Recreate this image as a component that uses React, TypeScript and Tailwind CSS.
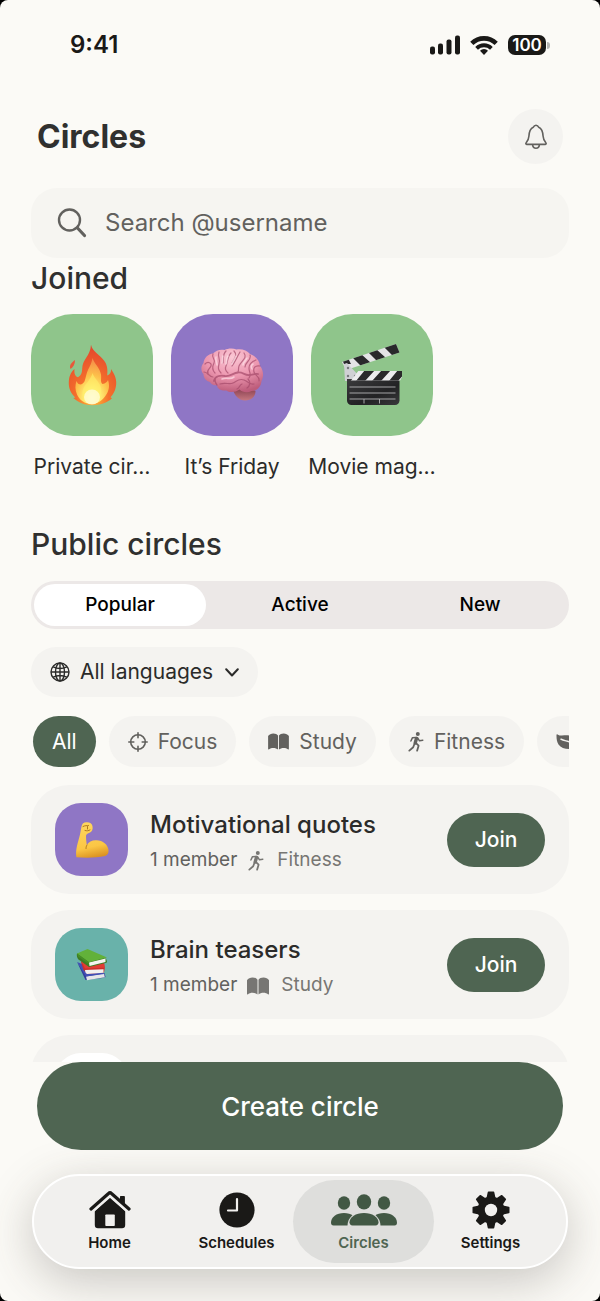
import { useState } from "react";
import type { ReactNode } from "react";
import clsx from "clsx";

interface IconProps {
  className?: string;
}

/* ---------- Status bar ---------- */

function SignalIcon() {
  return (
    <svg width="30" height="20" viewBox="0 0 30 20" fill="currentColor" aria-hidden="true">
      <rect x="0" y="11.5" width="5" height="8" rx="2" />
      <rect x="8" y="8.500" width="5" height="11" rx="2" />
      <rect x="16.5" y="4.5" width="5" height="15" rx="2" />
      <rect x="25" y="0.5" width="5" height="19" rx="2" />
    </svg>
  );
}

function WifiIcon() {
  return (
    <svg width="28" height="20" viewBox="0 0 28 20" fill="none" stroke="currentColor" aria-hidden="true">
      <path d="M1.800 8.300a17.500 17.500 0 0 1 24.400 0" strokeWidth="4.600" />
      <path d="M6.600 13.300a10.500 10.500 0 0 1 14.800 0" strokeWidth="3.800" />
      <path d="M14 20l-4-4.200a5.600 5.600 0 0 1 8 0z" fill="currentColor" stroke="none" />
    </svg>
  );
}

function StatusBar() {
  return (
    <div className="flex h-[90px] shrink-0 items-center justify-between pr-[50px] pl-[70px] text-[#1a1917]">
      <span className="text-2xl font-semibold">9:41</span>
      <div className="flex items-center gap-[10px]">
        <SignalIcon />
        <WifiIcon />
        <div className="flex items-center gap-px">
          <span className="flex h-5 w-[38px] items-center justify-center rounded-[7px] bg-[#1a1917] text-[17px] leading-none font-semibold text-white">
            100
          </span>
          <span className="h-[7px] w-[3px] rounded-r-full bg-[#b5b4b1]" />
        </div>
      </div>
    </div>
  );
}

/* ---------- Line icons ---------- */

function BellIcon() {
  return (
    <svg width="24" height="26" viewBox="0 0 24 26" fill="none" stroke="currentColor" strokeWidth="1.6" strokeLinejoin="round" aria-hidden="true">
      <path d="M2.6 20.4c-.8 0-1-.9-.5-1.5 1.7-2 2.6-3 2.8-6.600C5.200 7.500 6 4.600 9.300 3.300 9.900 1.800 10.800 1.200 12 1.200s2.100.6 2.700 2.100c3.300 1.300 4.100 4.200 4.400 9 .2 3.600 1.100 4.600 2.800 6.600.5.600.3 1.500-.5 1.500z" />
      <path d="M8.600 20.600c.2 2.300 1.500 3.600 3.400 3.600s3.200-1.300 3.400-3.600" />
    </svg>
  );
}

function SearchIcon() {
  return (
    <svg width="30" height="30" viewBox="0 0 30 30" fill="none" stroke="currentColor" strokeLinecap="round" aria-hidden="true">
      <circle cx="12.500" cy="12" r="10.500" strokeWidth="2.400" />
      <path d="M20.500 20l7 7.500" strokeWidth="3.200" />
    </svg>
  );
}

function GlobeIcon() {
  return (
    <svg width="20" height="20" viewBox="0 0 20 20" fill="none" stroke="currentColor" strokeWidth="1.400" aria-hidden="true">
      <circle cx="10" cy="10" r="9" />
      <ellipse cx="10" cy="10" rx="4.500" ry="9" />
      <path d="M10 1v18M1 10h18M3.200 4.800c4 2 9.600 2 13.600 0M3.200 15.200c4-2 9.600-2 13.600 0" />
    </svg>
  );
}

function ChevronIcon() {
  return (
    <svg className="ml-[2px]" width="14" height="9" viewBox="0 0 14 9" fill="none" stroke="currentColor" strokeWidth="2" strokeLinecap="round" strokeLinejoin="round" aria-hidden="true">
      <path d="M1.200 1.200L7 7.500l5.800-6.300" />
    </svg>
  );
}

function FocusIcon() {
  return (
    <svg width="20" height="20" viewBox="0 0 20 20" fill="none" stroke="currentColor" strokeWidth="1.600" strokeLinecap="round" aria-hidden="true">
      <circle cx="10" cy="10" r="7.300" />
      <path d="M10 .8v5M10 14.200v5M.8 10h5M14.200 10h5" />
    </svg>
  );
}

function BookIcon({ className }: IconProps) {
  return (
    <svg className={className} viewBox="0 0 22 18" fill="currentColor" aria-hidden="true">
      <path d="M0 3.200C1.200 1.300 3.200.4 5.500.4s4 .8 5 2.300v14.900c-1.200-1.200-3-1.800-5-1.800-1.800 0-3.300.5-4.400 1.500-.6.4-1.100.2-1.100-.5zM22 3.200C20.800 1.300 18.800.4 16.500.4s-4 .8-5 2.300v14.900c1.200-1.200 3-1.800 5-1.800 1.800 0 3.300.5 4.400 1.500.6.4 1.100.2 1.100-.5z" />
    </svg>
  );
}

function RunnerIcon({ className }: IconProps) {
  return (
    <svg className={className} viewBox="0 0 16 20" fill="none" stroke="currentColor" strokeLinecap="round" strokeLinejoin="round" aria-hidden="true">
      <circle cx="9.800" cy="2.100" r="2" fill="currentColor" stroke="none" />
      <path d="M8.500 6.400L7.200 11" strokeWidth="3.400" />
      <path d="M8.200 5.400L4.500 5.700 2.900 9" strokeWidth="1.500" />
      <path d="M9.600 5.900l1.900 2.900 3.300-.6" strokeWidth="1.500" />
      <path d="M8 11.200l2.600 2.500-1.500 5" strokeWidth="1.800" />
      <path d="M6.500 11.800l-1.300 3.500-3.900 3.300" strokeWidth="1.800" />
    </svg>
  );
}

function LeafIcon() {
  return (
    <svg className="h-4 w-[22px] shrink-0" viewBox="0 0 22 16" aria-hidden="true">
      <path d="M.5.800c0-.6.600-.8 1-.4C4.500 2.600 9 .8 13.500 1.500c5.500 1 7.500 5.500 6.500 11.500-.2 1-1 1.500-2 1.600-6 1-12.500.4-15.500-4C.8 8 .4 4.500.5.800z" fill="currentColor" />
      <path d="M5 5.200c3.500 2.500 8.500.8 12.500 5.300" fill="none" stroke="#f4f3f0" strokeWidth="1.500" strokeLinecap="round" />
    </svg>
  );
}

/* ---------- Tab bar icons ---------- */

function HomeIcon() {
  return (
    <svg width="42" height="38" viewBox="0 0 42 38" aria-hidden="true">
      <path d="M32 5h2.800c.5 0 .9.400.9.900v9.600L31.100 11.500V5.900c0-.5.400-.9.900-.9z" fill="currentColor" />
      <path d="M21 6L5.800 20v14a3.200 3.200 0 0 0 3.200 3.200h24a3.200 3.200 0 0 0 3.200-3.200V20z" fill="currentColor" />
      <path d="M1.500 20.500L21 3.500l19.500 17" fill="none" stroke="#f1f0ee" strokeWidth="5" />
      <path d="M2 18L19.500 2.500a2.200 2.200 0 0 1 3 0L40 18" fill="none" stroke="currentColor" strokeWidth="3.200" strokeLinecap="round" />
      <path d="M31.100 5.900c0-.5.400-.9.900-.9h2.800c.5 0 .9.400.9.900v8l-4.600-4z" fill="currentColor" />
      <rect x="16.300" y="23.500" width="9.500" height="11.500" rx=".8" fill="#f1f0ee" />
    </svg>
  );
}

function ClockIcon() {
  return (
    <svg width="36" height="36" viewBox="0 0 36 36" fill="none" aria-hidden="true">
      <circle cx="18" cy="18" r="17.600" fill="currentColor" />
      <path d="M18 7v11.500H9" stroke="#f1f0ee" strokeWidth="2.200" strokeLinecap="round" strokeLinejoin="round" />
    </svg>
  );
}

function PeopleIcon() {
  return (
    <svg width="66" height="32" viewBox="0 0 66 32" fill="currentColor" aria-hidden="true">
      <ellipse cx="13" cy="9" rx="6.200" ry="6.700" />
      <path d="M0 28.800C0 23 5.500 19 13 19c7.200 0 13 4 13 9.800 0 1.600-.8 2.700-2.500 2.700h-21C.8 31.500 0 30.400 0 28.800z" />
      <ellipse cx="53" cy="9" rx="6.200" ry="6.700" />
      <path d="M40 28.800C40 23 45.500 19 53 19c7.200 0 13 4 13 9.800 0 1.600-.8 2.700-2.500 2.700h-21c-1.700 0-2.500-1.100-2.500-2.700z" />
      <path d="M16.500 33c-.6-9 6.500-15.500 16.500-15.500S50.100 24 49.500 33z" fill="#dededc" />
      <ellipse cx="33" cy="7.800" rx="7.200" ry="7.600" />
      <path d="M18.500 28.300c0-5 6.200-9.300 14.500-9.300s14.500 4.300 14.500 9.300c0 2-1 3.200-3 3.200h-23c-2 0-3-1.200-3-3.200z" />
    </svg>
  );
}

function GearIcon() {
  return (
    <svg width="38" height="38" viewBox="0 0 38 38" aria-hidden="true">
      <g fill="currentColor" stroke="currentColor" strokeWidth="1.600" strokeLinejoin="round">
        {[0, 45, 90, 135, 180, 225, 270, 315].map((angle) => (
          <path key={angle} d="M16.500 1.300h5l1.500 7h-8z" transform={`rotate(${angle} 19 19)`} />
        ))}
        <circle cx="19" cy="19" r="12.600" />
      </g>
      <circle cx="19" cy="19" r="6.200" fill="#f1f0ee" />
    </svg>
  );
}

/* ---------- Circle artwork ---------- */

function FireArt() {
  return (
    <svg width="62" height="62" viewBox="0 0 62 62" aria-hidden="true">
      <defs>
        <radialGradient id="fire-outer" cx=".5" cy=".9" r=".85">
          <stop offset="0" stopColor="#ffc23a" />
          <stop offset=".4" stopColor="#f4702c" />
          <stop offset="1" stopColor="#e4482c" />
        </radialGradient>
        <radialGradient id="fire-inner" cx=".5" cy=".88" r=".85">
          <stop offset="0" stopColor="#fffef0" />
          <stop offset=".25" stopColor="#fff27a" />
          <stop offset=".6" stopColor="#fdc04a" />
          <stop offset="1" stopColor="#f58a48" />
        </radialGradient>
      </defs>
      <path d="M14 16c-4 3-6 5.500-4.500 9 3-2 4.500-5 4.500-9z" fill="#e8583a" />
      <path d="M30 .8c1.500 7 8 9.200 13 15.700 3.600 4.700 3.700 9.700 3.200 15 3-1 4-3.500 3.800-6.500 3.500 5 6.500 11 4.800 18-.8 4-2.500 7.500-5.300 10.300l1.500 1C46 59 39 61.200 31.500 61.200c-8 0-13-2.200-19.200-7.200l2-.6C9.500 49.500 7.500 43.500 7.800 38c.2-5 1.700-9.500 5.700-13-.3 4 0 6.800 3.500 8.300 3-1.800 4-4 4.200-8.800C21.500 15 29.500 12 30 .8z" fill="url(#fire-outer)" />
      <path d="M31.500 14c2 6 7.500 10 8.500 16.500.6 4.500-1 7.500 1.500 9.500 3-.5 4.500-2 5.500-4 2 5 1 11-2 15-3.500 5.500-8.500 9-14 9-7.500 0-12.500-4-15-9.500-2-4.500-2-9.500-.5-13.500 1 2.500 2 3.500 4.500 3.500 4.500-1.500 4-6 6-12 1.800-5 4.500-8 5.500-14.500z" fill="url(#fire-inner)" />
      <path d="M31.500 29c2 5.500 6 8 8 13 2 5.500 0 17-8 18-9-.5-12-9.500-9-16 2.500-5 7.500-9 9-15z" fill="#fff06b" opacity=".6" />
      <ellipse cx="31" cy="53" rx="8" ry="7.500" fill="#fffde6" opacity=".7" />
    </svg>
  );
}

function BrainArt() {
  return (
    <svg width="64" height="54" viewBox="0 0 64 54" aria-hidden="true">
      <defs>
        <radialGradient id="brain-top" cx=".5" cy=".2" r=".8">
          <stop offset="0" stopColor="#fbc8d5" />
          <stop offset=".55" stopColor="#ec96af" />
          <stop offset="1" stopColor="#bd5c7a" />
        </radialGradient>
        <linearGradient id="brain-stem" x1="0" y1="0" x2="0" y2="1">
          <stop offset="0" stopColor="#7d3547" />
          <stop offset="1" stopColor="#c67880" />
        </linearGradient>
      </defs>
      <path d="M33 42c2 6 6 10.500 12 10.500 6.500 0 10.500-4 10.500-9.500L46 38z" fill="url(#brain-stem)" />
      <path d="M17 37c-3 .8-6-.5-7-3-4-1-6.500-4-6.500-8C.5 23 .8 18 3.500 15 4 10 8 6 13 5.500 16 2.500 20 1 24.500 2 28 .2 33 0 36.500 1.500 42 .5 47 2.500 50 6c5.500 2 9.500 6.500 10 12 3.500 4 4 10 1.500 15-.5 6-4.500 10-10 10-4 2.200-9 1.500-12-1.500-4 3-10 3.300-13 1-5 .5-9.500-1.500-9.500-5.500z" fill="url(#brain-top)" />
      <g fill="none" stroke="#a54a6a" strokeWidth="1.200" strokeLinecap="round" opacity=".7">
        <path d="M14 33c1-5 6-6 11-5 5 .8 8-3 13-3.500 5-.5 7 3 11 2.500 4 0 6-2 9-1" strokeWidth="1.800" />
        <path d="M17 37c-2-2-2-4-2-6M20 36c6-2 9 1 13-1s6-5 11-3 6 5 10 4" />
        <path d="M5 16c3-3 7-1 6 2s-5 4-3 8M13 6c-2 4 3 5 1 9s-2 7 1 10" />
        <path d="M19 4c-2 5 2 7 0 12-1 4-1 6 2 9M26 3c-4 4-2 8-3 12M31 5c-4 4-3 9-5 13s1 6 2 7" />
        <path d="M34 3c4 4 0 8-2 12M40 4c-3 5-5 10-8 14M44 5c4 5-3 8-5 13-1 3 0 4-1 6" />
        <path d="M50 7c2 5-5 7-5 12M56 12c-3 1-7 3-7 8s3 6 0 10M60 18c-5-1-7 2-6 6s6 4 5 9" />
        <path d="M4 24c4 0 5 5 9 5M48 31c3 3 2 7-1 9M37 41c3-1 2-4 5-5" />
      </g>
      <g fill="none" stroke="#ffe0e8" strokeWidth="1.600" strokeLinecap="round" opacity=".7">
        <path d="M16 9c-1 3 1 5 1 8M23 8c-1 3 0 4-1 7M28 8c-2 3-1 6-2 8M36 8c-1 3-3 5-4 8M47 10c-1 3-4 4-4 7" />
        <path d="M22 31c5-2 8 1 12-2M53 16c-2 1-2 3-1 5" />
      </g>
    </svg>
  );
}

function ClapperArt() {
  return (
    <svg width="60" height="62" viewBox="0 0 60 62" aria-hidden="true">
      <defs>
        <clipPath id="clap-arm">
          <path d="M0 18L54 0l3.500 8.500L4 26z" />
        </clipPath>
        <clipPath id="clap-bar">
          <path d="M3 27h57v6l-2 3.500H3z" />
        </clipPath>
        <linearGradient id="clap-board" x1="0" y1="0" x2="1" y2="1">
          <stop offset="0" stopColor="#3b3b3d" />
          <stop offset=".6" stopColor="#222224" />
          <stop offset="1" stopColor="#39393b" />
        </linearGradient>
      </defs>
      <g clipPath="url(#clap-arm)">
        <path d="M0 0h60v28H0z" fill="#e4e4e6" />
        <path d="M0 15l6-1 3 6H2zM10 13l9-3 10 9-9 4zM26 8l8-3 10 9-9 3zM42 3l12-4 6 12-8 2z" fill="#29292b" />
      </g>
      <path d="M2 20l3-1 13 14-3 4H3z" fill="#cfd0d4" />
      <circle cx="6" cy="24" r="1.200" fill="#77787c" />
      <circle cx="6" cy="32" r="1.200" fill="#77787c" />
      <circle cx="13" cy="32" r="1.200" fill="#77787c" />
      <path d="M5 35h52.500v21.500a4.500 4.500 0 0 1-4.500 4.500H9.500A4.500 4.500 0 0 1 5 56.500z" fill="url(#clap-board)" />
      <g clipPath="url(#clap-bar)">
        <path d="M17 26h43v12H8z" fill="#ececee" />
        <path d="M23 26h10l-10 11h-9zM40 26h9L39 37h-9zM56 26h10L56 37h-9z" fill="#29292b" />
      </g>
      <path d="M7.500 43h46M7.500 49h46M7.500 55h46M22 55v4.500M37.500 55v4.500" stroke="#b4b4b7" strokeWidth=".9" />
    </svg>
  );
}

function MuscleArt() {
  return (
    <svg width="34" height="38" viewBox="0 0 34 38" aria-hidden="true">
      <defs>
        <linearGradient id="muscle-skin" x1=".3" y1="0" x2=".5" y2="1">
          <stop offset="0" stopColor="#ffd75e" />
          <stop offset=".7" stopColor="#fbc645" />
          <stop offset="1" stopColor="#dc9322" />
        </linearGradient>
      </defs>
      <path d="M6.500 5.500C7 2.500 9 1 12 1.200c3 0 5 1.300 5.500 4 .6 3.300-.5 5.500-3.500 6.800-1.800.8-3 1.300-3 3 0 3.500.4 6 .8 9 2-3.500 5.700-5 9.700-4.700C28 19.600 32.800 23.500 33.500 29c.3 3-.7 5-3.500 6-9 2-20 2-28.600 1.200C.2 28 3 22 5 13.500z" fill="url(#muscle-skin)" />
      <path d="M8 5.500c2-1.200 4-.7 5.500-1M10 9.500c2 .6 3.500.4 5-.6M12.500 5.500v2.500M12 24c-.8 1.300-1 2.300-1 3.500" fill="none" stroke="#b07a20" strokeWidth="1" strokeLinecap="round" />
    </svg>
  );
}

function BooksArt() {
  return (
    <svg width="32" height="34" viewBox="0 0 32 34" aria-hidden="true">
      <path d="M1.500 15l8 17 17-2 3-1-1-4-17 2z" fill="#33409c" />
      <path d="M10 28.500l18-3 .8 3.700-17.800 3z" fill="#e6e6e8" />
      <path d="M1 14l9 14.500 18-2.500-1-2z" fill="#4350b5" />
      <path d="M5 14l2.500 8 4 4 16.500-1.500.8-4.500L28 15z" fill="#c9302c" />
      <path d="M9 22l18.500-.8v3.500L11 26c-1.500-1-2-2.500-2-4z" fill="#f2f1ef" />
      <path d="M5 13l4 7.500 19.500-.8L28 13z" fill="#e23b33" />
      <path d="M1 5.500C.5 8 1 9.800 2.500 11.500L13 19l17.500-4.300.5-1.200-1-3z" fill="#3d7c22" />
      <path d="M13 14.500l16.500-4V14L13.500 18z" fill="#f4f4ef" />
      <path d="M1 5.500L11.500 1 31 9.500l-18 4.800z" fill="#62b13a" />
      <path d="M1 5.500l12 8.800v2L2 8.500z" fill="#468f27" />
    </svg>
  );
}

/* ---------- Data ---------- */

const joinedCircles = [
  { name: "Private cir…", color: "bg-[#8fc58b]", art: <FireArt /> },
  { name: "It’s Friday", color: "bg-[#8f76c5]", art: <BrainArt /> },
  { name: "Movie mag…", color: "bg-[#8fc58b]", art: <ClapperArt /> },
];

const tabs = ["Popular", "Active", "New"];

const categories = [
  { name: "Focus", icon: <FocusIcon /> },
  { name: "Study", icon: <BookIcon className="h-[17px] w-[21px]" /> },
  { name: "Fitness", icon: <RunnerIcon className="h-5 w-4" /> },
];

const publicCircles = [
  {
    name: "Motivational quotes",
    members: "1 member",
    category: "Fitness",
    color: "bg-[#8f76c5]",
    art: <MuscleArt />,
    icon: <RunnerIcon className="h-5 w-[18px]" />,
  },
  {
    name: "Brain teasers",
    members: "1 member",
    category: "Study",
    color: "bg-[#69b2aa]",
    art: <BooksArt />,
    icon: <BookIcon className="h-[18px] w-[22px]" />,
  },
];

const navItems = [
  { name: "Home", icon: <HomeIcon /> },
  { name: "Schedules", icon: <ClockIcon /> },
  { name: "Circles", icon: <PeopleIcon /> },
  { name: "Settings", icon: <GearIcon /> },
];

/* ---------- Sections ---------- */

function Chip({
  active,
  onClick,
  label,
  children,
}: {
  active: boolean;
  onClick: () => void;
  label?: string;
  children: ReactNode;
}) {
  return (
    <button
      onClick={onClick}
      aria-label={label}
      className={clsx(
        "flex h-[51px] shrink-0 items-center gap-[10px] rounded-full px-[19px] text-[21px]",
        active ? "bg-[#4f6552] text-white" : "bg-[#f4f3f0] text-[#62615e]"
      )}
    >
      {children}
    </button>
  );
}

function CircleCard({ circle }: { circle: (typeof publicCircles)[number] }) {
  return (
    <li className="flex h-[109px] shrink-0 items-center rounded-[38px] bg-[#f4f3f0] px-6">
      <div
        className={`flex size-[73px] shrink-0 items-center justify-center rounded-[26px] ${circle.color}`}
      >
        {circle.art}
      </div>
      <div className="ml-[22px] flex-1 pt-[6px]">
        <h3 className="text-2xl leading-8 font-medium whitespace-nowrap text-[#2b2b2a]">
          {circle.name}
        </h3>
        <div className="mt-1 flex h-8 items-center text-[19px] text-[#62615e]">
          <span>{circle.members}</span>
          <span className="ml-[10px] flex items-center gap-3 text-[#777673]">
            {circle.icon}
            <span>{circle.category}</span>
          </span>
        </div>
      </div>
      <button className="h-[54px] w-[98px] rounded-full bg-[#4f6552] text-[21px] font-medium text-white">
        Join
      </button>
    </li>
  );
}

export default function App() {
  const [tab, setTab] = useState("Popular");
  const [category, setCategory] = useState("All");
  const [page, setPage] = useState("Circles");

  return (
    <div className="h-screen bg-black font-['Inter','Noto_Sans',sans-serif]">
      <div className="flex h-full flex-col overflow-hidden rounded-lg bg-[#fbfaf6]">
        <StatusBar />

        <header className="flex shrink-0 items-center justify-between px-[37px] pt-[19px] pb-6">
          <h1 className="text-[32px] leading-10 font-bold text-[#30302f]">Circles</h1>
          <button
            aria-label="Notifications"
            className="flex size-[55px] items-center justify-center rounded-full bg-[#f4f3f0] text-[#62615e]"
          >
            <BellIcon />
          </button>
        </header>

        <main className="flex min-h-0 flex-1 flex-col overflow-hidden px-[31px]">
          <label className="flex h-[70px] shrink-0 items-center gap-[18px] rounded-[26px] bg-[#f6f5f1] px-[26px] text-[#62615e]">
            <SearchIcon />
            <input
              type="text"
              aria-label="Search"
              placeholder="Search @username"
              className="min-w-0 flex-1 bg-transparent text-2xl outline-none placeholder:text-[#62615e]"
            />
          </label>

          {/* Joined */}
          <h2 className="text-[30px] leading-10 font-medium text-[#30302f]">Joined</h2>
          <div className="mt-4 flex shrink-0 gap-[18px]">
            {joinedCircles.map((circle) => (
              <button key={circle.name} className="flex w-[122px] flex-col items-center">
                <span
                  className={`flex h-[122px] w-full items-center justify-center rounded-[42px] ${circle.color}`}
                >
                  {circle.art}
                </span>
                <span className="mt-4 text-[21px] leading-[30px] whitespace-nowrap text-[#2b2b2a]">
                  {circle.name}
                </span>
              </button>
            ))}
          </div>

          {/* Public circles */}
          <h2 className="mt-[42px] text-[30px] leading-10 font-medium text-[#30302f]">
            Public circles
          </h2>
          <div role="tablist" className="mt-[17px] grid h-12 shrink-0 grid-cols-3 gap-2 rounded-full bg-[#ece8e7] p-[3px]">
            {tabs.map((name) => (
              <button
                key={name}
                role="tab"
                aria-selected={tab === name}
                onClick={() => setTab(name)}
                className={clsx(
                  "rounded-full text-[19px] font-medium text-black",
                  tab === name && "bg-white"
                )}
              >
                {name}
              </button>
            ))}
          </div>

          <button className="mt-[18px] flex h-[50px] shrink-0 items-center gap-[10px] self-start rounded-full bg-[#f4f3f0] px-[19px] text-[21px] text-[#2b2b2a]">
            <GlobeIcon />
            All languages
            <ChevronIcon />
          </button>

          <div className="mt-[19px] flex shrink-0 gap-[13px] overflow-hidden pl-[2px]">
            <Chip active={category === "All"} onClick={() => setCategory("All")}>
              All
            </Chip>
            {categories.map(({ name, icon }) => (
              <Chip key={name} active={category === name} onClick={() => setCategory(name)}>
                {icon}
                {name}
              </Chip>
            ))}
            <Chip active={false} label="Nature" onClick={() => setCategory("Nature")}>
              <LeafIcon />
            </Chip>
          </div>

          <ul className="mt-[18px] flex flex-col gap-4">
            {publicCircles.map((circle) => (
              <CircleCard key={circle.name} circle={circle} />
            ))}
            <li className="flex h-[109px] shrink-0 items-center rounded-[38px] bg-[#f4f3f0] px-6">
              <div className="size-[73px] rounded-[26px] bg-white" />
            </li>
          </ul>
        </main>

        <footer className="shrink-0 pb-8">
          <div className="px-[37px]">
            <button className="h-[88px] w-full rounded-full bg-[#4f6552] text-[26px] font-medium text-white">
              Create circle
            </button>
          </div>
          <nav className="mx-8 mt-6 grid h-[95px] grid-cols-4 rounded-full border-2 border-white bg-[#f1f0ee] px-3 py-1 shadow-[0_12px_48px_rgba(70,60,55,0.28)]">
            {navItems.map(({ name, icon }) => (
              <button
                key={name}
                onClick={() => setPage(name)}
                aria-current={page === name ? "page" : undefined}
                className={clsx(
                  "-mx-[7px] flex flex-col items-center justify-center gap-1 rounded-full text-[15px] leading-5 font-semibold",
                  page === name ? "bg-[#dededc] text-[#4f6552]" : "text-[#1a1917]"
                )}
              >
                <span className={clsx("flex h-[38px] items-center", page === name && "text-[#425844]")}>
                  {icon}
                </span>
                {name}
              </button>
            ))}
          </nav>
        </footer>
      </div>
    </div>
  );
}
